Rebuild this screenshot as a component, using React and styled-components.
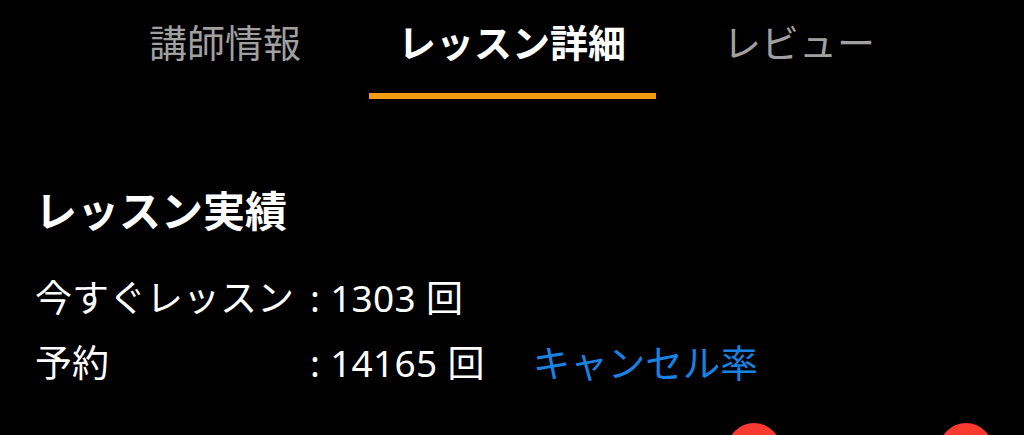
import React from "react";
import styled, { createGlobalStyle } from "styled-components";

const GlobalStyle = createGlobalStyle`
  html, body {
    margin: 0;
    padding: 0;
    background: #000;
  }
  body {
    font-family: "Noto Sans", "Noto Sans CJK JP", sans-serif;
    color: #fff;
  }
`;

const Page = styled.div`
  width: 1024px;
  height: 435px;
  overflow: hidden;
  background: #000;
`;

const TabBar = styled.nav`
  display: flex;
  justify-content: center;
  padding-top: 20px;
`;

const Tab = styled.div`
  width: 287px;
  text-align: center;
  font-size: 38px;
  line-height: 44px;
  font-weight: ${(p) => (p.$active ? 700 : 400)};
  color: ${(p) => (p.$active ? "#fff" : "#a0a0a0")};
  padding-bottom: 29px;
  border-bottom: 6px solid ${(p) => (p.$active ? "#f39c12" : "transparent")};
`;

const Section = styled.section`
  padding: 0 0 0 35px;
  margin-top: 87px;
`;

const Heading = styled.h2`
  margin: 0 0 27px 0;
  font-size: 42px;
  line-height: 50px;
  font-weight: 700;
`;

const Row = styled.div`
  display: flex;
  align-items: center;
  height: 65px;
  font-size: 37px;
`;

const Label = styled.span`
  width: 275px;
  white-space: nowrap;
`;

const Value = styled.span`
  white-space: nowrap;
  letter-spacing: 0.3px;
`;

const Link = styled.a`
  margin-left: 48px;
  font-size: 37.5px;
  color: #1a82e2;
  text-decoration: none;
`;

const Badges = styled.div`
  display: flex;
  justify-content: flex-end;
  gap: 158px;
  padding-right: 31px;
  margin-top: 30px;
`;

const Dot = styled.span`
  width: 54px;
  height: 54px;
  border-radius: 50%;
  background: #fa3a2f;
`;

export default function App() {
  return (
    <Page>
      <GlobalStyle />
      <TabBar>
        <Tab>講師情報</Tab>
        <Tab $active>レッスン詳細</Tab>
        <Tab>レビュー</Tab>
      </TabBar>
      <Section>
        <Heading>レッスン実績</Heading>
        <Row>
          <Label>今すぐレッスン</Label>
          <Value>: 1303 回</Value>
        </Row>
        <Row>
          <Label>予約</Label>
          <Value>: 14165 回</Value>
          <Link href="#">キャンセル率</Link>
        </Row>
      </Section>
      <Badges>
        <Dot />
        <Dot />
      </Badges>
    </Page>
  );
}
